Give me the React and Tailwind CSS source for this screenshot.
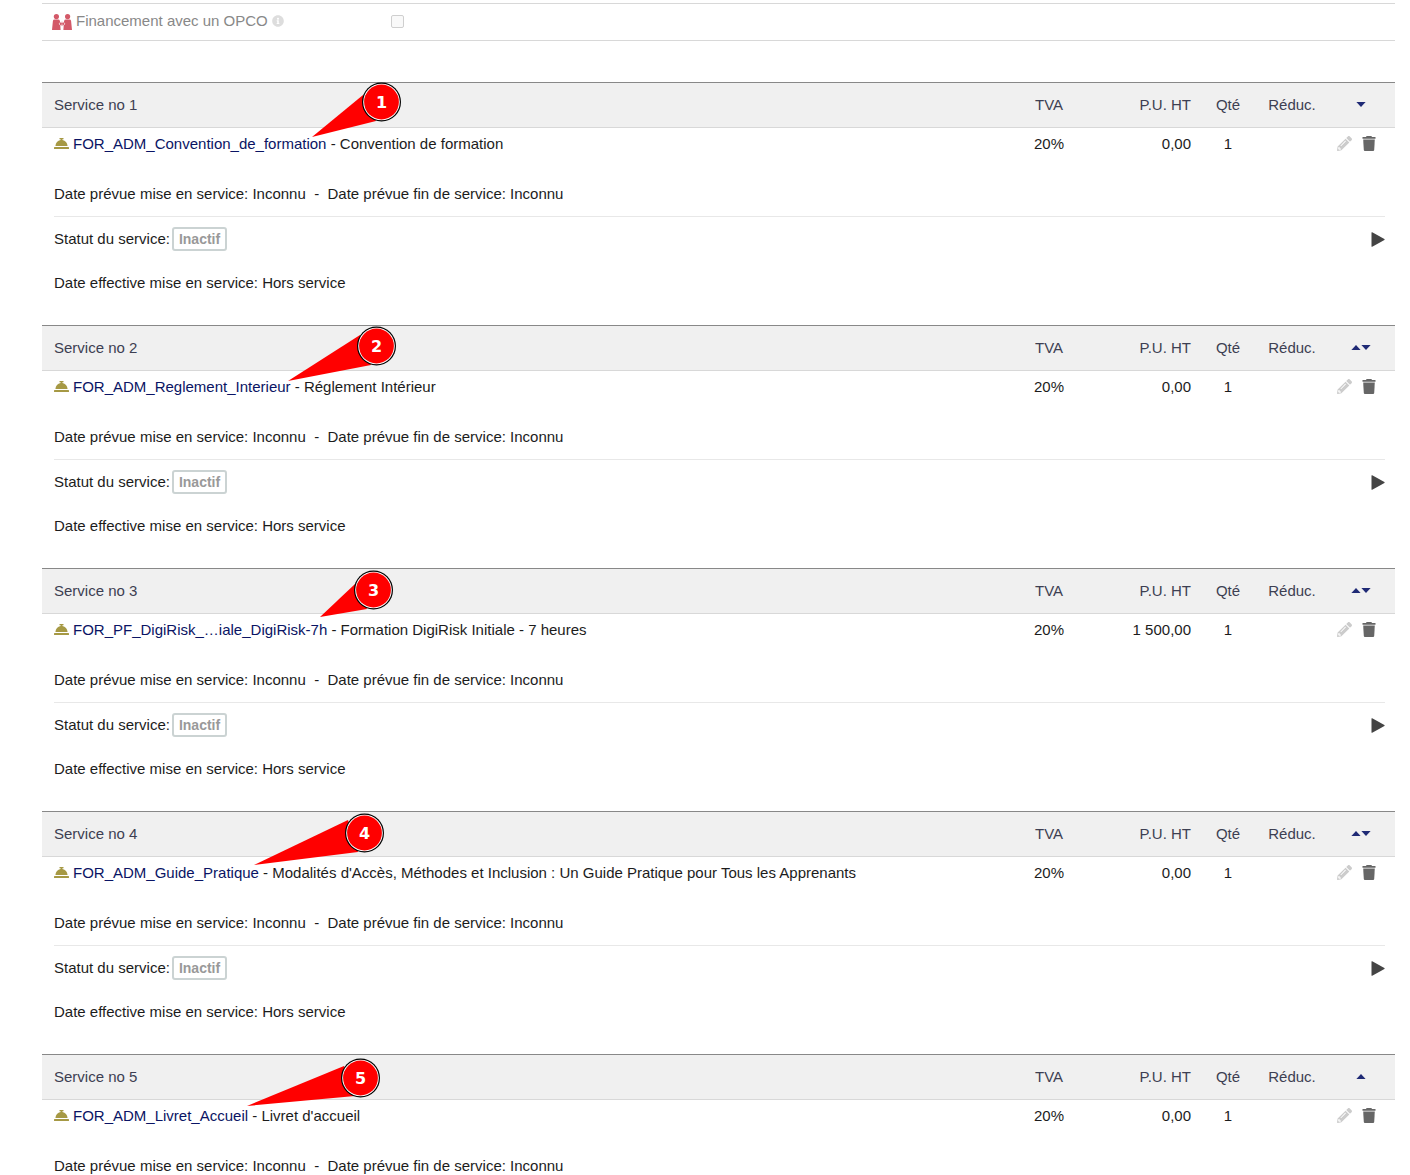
import { useState } from 'react'
import { FaInfoCircle, FaPencilAlt } from 'react-icons/fa'

// Marker coordinates are relative to the top left corner of the service header
const SERVICES = [
  {
    ref: 'FOR_ADM_Convention_de_formation',
    label: 'Convention de formation',
    price: '0,00',
    status: 'Inactif',
    marker: { cx: 339.5, cy: 20, points: '270,55 321,13 334,39' },
  },
  {
    ref: 'FOR_ADM_Reglement_Interieur',
    label: 'Réglement Intérieur',
    price: '0,00',
    status: 'Inactif',
    marker: { cx: 334.5, cy: 21, points: '246,56 318,10 329,40' },
  },
  {
    ref: 'FOR_PF_DigiRisk_…iale_DigiRisk-7h',
    label: 'Formation DigiRisk Initiale - 7 heures',
    price: '1 500,00',
    status: 'Inactif',
    marker: { cx: 331.5, cy: 22, points: '278,49 313,16 325,41' },
  },
  {
    ref: 'FOR_ADM_Guide_Pratique',
    label: "Modalités d'Accès, Méthodes et Inclusion : Un Guide Pratique pour Tous les Apprenants",
    price: '0,00',
    status: 'Inactif',
    marker: { cx: 322.5, cy: 22, points: '212,54 306,9 316,41' },
  },
  {
    ref: 'FOR_ADM_Livret_Accueil',
    label: "Livret d'accueil",
    price: '0,00',
    status: null,
    marker: { cx: 318.5, cy: 24, points: '205,52 302,12 313,42' },
  },
]

// --- Icons ---

function PeopleIcon() {
  return (
    <svg className="w-5 h-4 mr-1 mt-0.5" viewBox="0 0 20 16" fill="#d35968">
      <circle cx="4.4" cy="2.6" r="2.6" />
      <circle cx="15.6" cy="2.6" r="2.6" />
      <path d="M2.6 5.6H6.2Q7.6 5.6 7.9 7L8.2 8.2L6.7 9.8L8.3 11.4L8.6 16H0L0.9 7Q1.1 5.6 2.6 5.6Z" />
      <path d="M17.4 5.6H13.8Q12.4 5.6 12.1 7L11.8 8.2L13.3 9.8L11.7 11.4L11.4 16H20L19.1 7Q18.9 5.6 17.4 5.6Z" />
      <path d="M7.4 9.8L9.4 7.4V9.2H10.6V7.4L12.6 9.8L10.6 12.2V10.4H9.4V12.2Z" />
    </svg>
  )
}

function BellIcon() {
  return (
    <svg className="inline-block w-[15px] h-[11px] mr-1 align-baseline" viewBox="0 0 15 11" fill="#a69944">
      <path d="M5.5 0H9.5V1.2H8.4V2C11.4 2.4 13.3 4.9 13.6 8H1.4C1.7 4.9 3.6 2.4 6.6 2V1.2H5.5Z" />
      <rect y="9" width="15" height="2" rx="0.5" />
    </svg>
  )
}

function TrashIcon() {
  return (
    <svg className="w-[14px] h-[15px]" viewBox="0 0 14 15" fill="#666666">
      <path d="M0.5 1H4L4.6 0H9.4L10 1H13.5V2.7H0.5Z" />
      <path d="M1.2 3.6H12.8L12.2 14Q12.1 15 11.1 15H2.9Q1.9 15 1.8 14Z" />
    </svg>
  )
}

function PlayIcon() {
  return (
    <svg className="w-[14px] h-[15px]" viewBox="0 0 14 15" fill="#444444">
      <path d="M0.5 0.6Q0.5 0 1.2 0.2L13.4 6.9Q14 7.4 13.4 7.9L1.2 14.8Q0.5 15 0.5 14.4Z" />
    </svg>
  )
}

function Arrow({ up }) {
  return (
    <svg className="block w-[10px] h-[5px]" viewBox="0 0 10 5" fill="#1f2a75">
      <path d={up ? 'M5 0L9.6 5H0.4Z' : 'M0.4 0H9.6L5 5Z'} />
    </svg>
  )
}

function Marker({ number, cx, cy, points }) {
  return (
    <svg className="absolute left-0 -top-px w-[400px] h-[60px] overflow-visible pointer-events-none" viewBox="0 0 400 60">
      <polygon points={points} fill="#ff0000" />
      <circle cx={cx} cy={cy} r="19.5" fill="#000000" />
      <circle cx={cx} cy={cy} r="18.3" fill="#ffffff" />
      <circle cx={cx} cy={cy} r="17.4" fill="#ff0000" />
      <text x={cx} y={cy + 6} textAnchor="middle" fill="#ffffff" className="font-['DejaVu_Sans',sans-serif] font-bold text-[16px]">
        {number}
      </text>
    </svg>
  )
}

function Service({ service, number, isFirst, isLast }) {
  const headCell = 'h-[46px] border-t border-t-[#888888] border-b border-b-[#d8d8d8] p-0 font-normal'

  return (
    <tbody>
      {/* Header line */}
      <tr className="bg-[#f0f0f0] text-[#3d3f52]">
        <th scope="col" className={`${headCell} text-left`}>
          <div className="relative h-11 flex items-center pl-3">
            Service no {number}
            <Marker number={number} {...service.marker} />
          </div>
        </th>
        <th scope="col" className={headCell}>TVA</th>
        <th scope="col" className={`${headCell} text-right`}><span className="pr-1.5">P.U. HT</span></th>
        <th scope="col" className={headCell}>Qté</th>
        <th scope="col" className={headCell}>Réduc.</th>
        <th scope="col" className={headCell}>
          <div className="flex justify-center pl-0.5 pb-0.5">
            {!isFirst && <button type="button" aria-label="Monter"><Arrow up /></button>}
            {!isLast && <button type="button" aria-label="Descendre"><Arrow /></button>}
          </div>
        </th>
      </tr>

      {/* Product line */}
      <tr className="text-[#1c1c1c]">
        <td className="h-8 py-[7px] pl-3 whitespace-nowrap">
          <a href="#" className="text-[#0a1464]">
            <BellIcon />
            {service.ref}
          </a>
          {' - '}{service.label}
        </td>
        <td className="text-center">20%</td>
        <td className="pr-1.5 text-right">{service.price}</td>
        <td className="text-center">1</td>
        <td></td>
        <td className="align-top pt-2">
          <div className="flex gap-2.5 pl-3">
            <button type="button" aria-label="Modifier"><FaPencilAlt className="size-[15px] text-[#cccccc]" /></button>
            <button type="button" aria-label="Supprimer"><TrashIcon /></button>
          </div>
        </td>
      </tr>

      {/* Dates and status */}
      <tr className="text-[#1c1c1c]">
        <td colSpan="6" className="pl-3 pr-2.5 pt-[25px]">
          <div>Date prévue mise en service: Inconnu &nbsp;-&nbsp; Date prévue fin de service: Inconnu</div>
          {service.status && (
            <div className="mt-[13px] pb-[33px] border-t border-[#e8e8e8]">
              <div className="flex items-center pt-2.5">
                <span>Statut du service:</span>
                <span className="ml-0.5 h-6 px-[5px] flex items-center rounded-[3px] border-2 border-[#cbd3d3] text-[14px] font-bold text-[#999999]">
                  {service.status}
                </span>
                <button type="button" aria-label="Activer" className="ml-auto">
                  <PlayIcon />
                </button>
              </div>
              <div className="mt-[23px]">Date effective mise en service: Hors service</div>
            </div>
          )}
        </td>
      </tr>
    </tbody>
  )
}

export default function App() {
  const [opco, setOpco] = useState(false)

  return (
    <main className="min-h-screen bg-white pl-[42px] pr-[15px] pt-[3px] font-['Liberation_Sans',Arial,sans-serif] text-[15px] leading-[18px]">
      {/* Extra field */}
      <div className="flex items-center h-[38px] mb-[41px] border-y border-[#d8d8d8] pl-2.5 pb-0.5">
        <label htmlFor="opco" className="flex items-center w-[339px] text-[#888888]">
          <PeopleIcon />
          Financement avec un OPCO
          <FaInfoCircle className="ml-1 size-3 text-[#dddddd]" />
        </label>
        <input
          id="opco"
          type="checkbox"
          checked={opco}
          onChange={(e) => setOpco(e.target.checked)}
          className="appearance-none size-[13px] rounded-[2px] border border-[#cfcfcf] bg-[#f9f9f9] checked:bg-[#888888]"
        />
      </div>

      {/* Service lines */}
      <table className="w-full table-fixed border-separate border-spacing-0">
        <colgroup>
          <col />
          <col className="w-20" />
          <col className="w-[108px]" />
          <col className="w-[62px]" />
          <col className="w-[66px]" />
          <col className="w-[70px]" />
        </colgroup>
        {SERVICES.map((service, index) => (
          <Service
            key={service.ref}
            service={service}
            number={index + 1}
            isFirst={index === 0}
            isLast={index === SERVICES.length - 1}
          />
        ))}
      </table>
    </main>
  )
}
